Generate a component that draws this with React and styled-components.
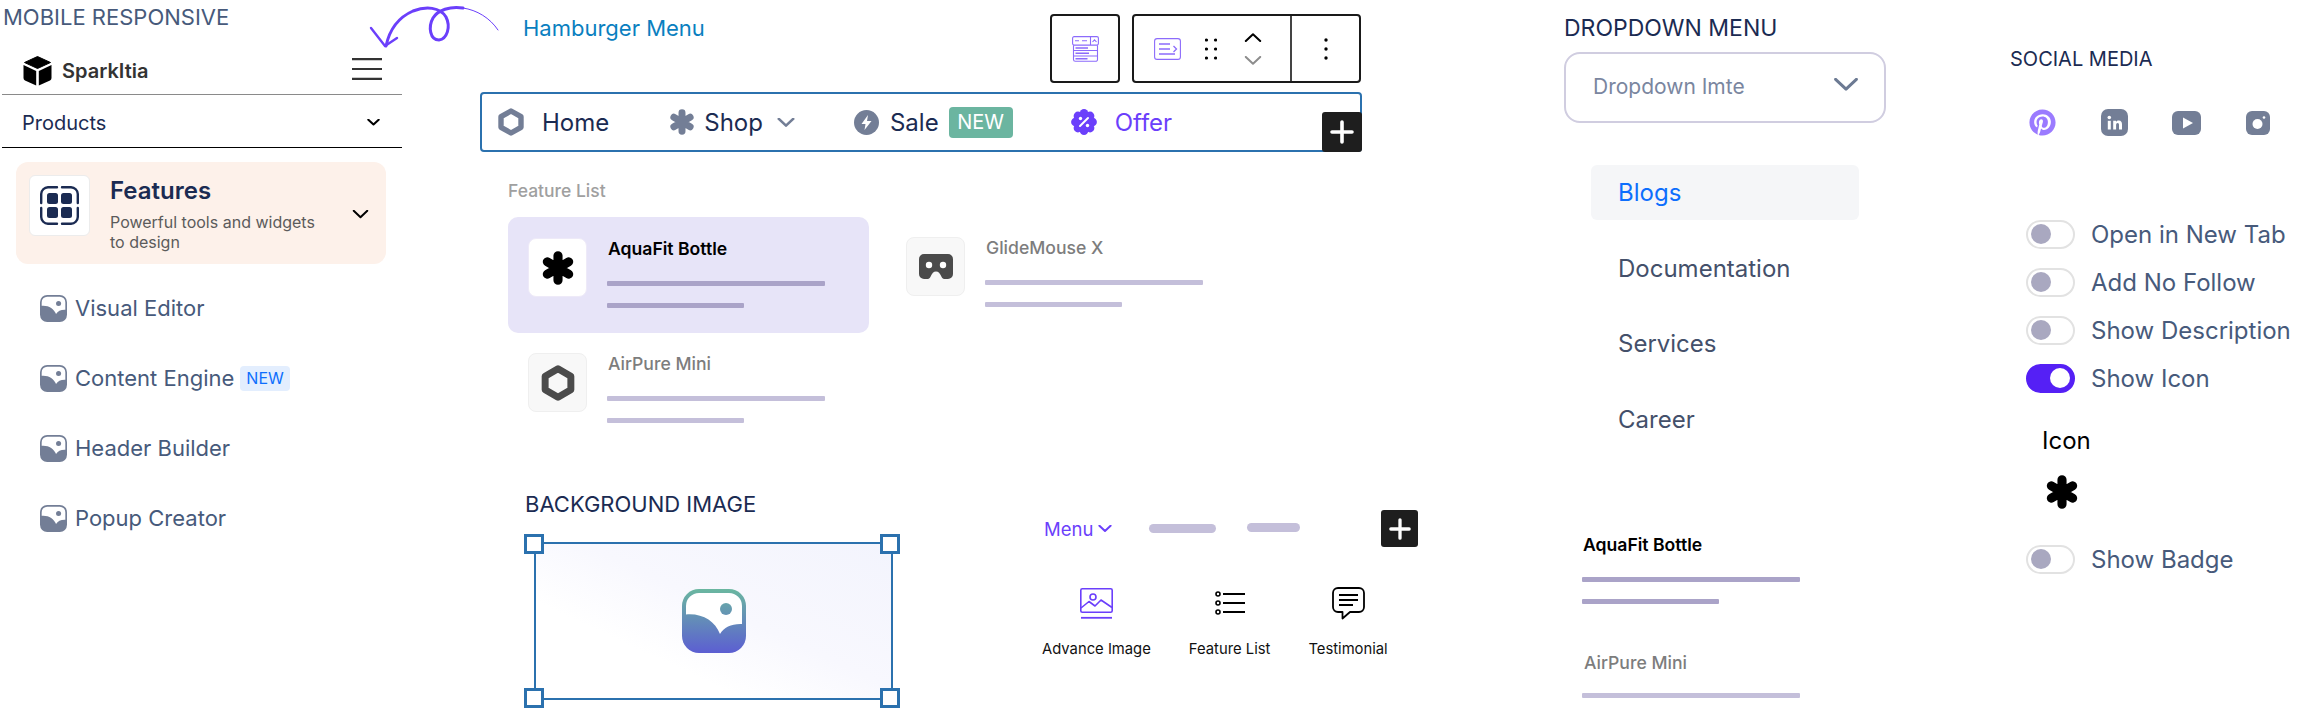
import styled, { createGlobalStyle } from "styled-components";
import { FaPinterest } from "react-icons/fa";

const INK = "#1b2b52";
const SLATE = "#475a7b";
const GLYPH = "#737e96";
const PURPLE = "#6b3ffb";
const SELECTION = "#2b71ae";

export default function App() {
	return (
		<Page>
			<GlobalStyle />
			<LoopArrow />

			<MobileColumn>
				<SectionTitle $size={22} $color={SLATE} $inset={1}>
					MOBILE RESPONSIVE
				</SectionTitle>
				<MobileHeader>
					<Brand>
						<CubeLogo />
						SparkItia
					</Brand>
					<HamburgerIcon />
				</MobileHeader>
				<ProductsRow>
					Products
					<Chevron size={13} stroke={2} color="#000" />
				</ProductsRow>
				<FeatureCard>
					<FeatureIconBox>
						<DashboardIcon />
					</FeatureIconBox>
					<FeatureCopy>
						<FeatureName>Features</FeatureName>
						<FeatureText>Powerful tools and widgets to design</FeatureText>
					</FeatureCopy>
					<Chevron size={17} stroke={2} color="#000" />
				</FeatureCard>
				<MobileList>
					{mobileItems.map((item) => (
						<MobileItem key={item.label}>
							<ImageGlyph size={27} fill={GLYPH} />
							{item.label}
							{item.badge && <SoftBadge>{item.badge}</SoftBadge>}
						</MobileItem>
					))}
				</MobileList>
			</MobileColumn>

			<EditorColumn>
				<TopRow>
					<HamburgerLabel>Hamburger Menu</HamburgerLabel>
					<Toolbars>
						<ToolGroup>
							<ToolCell $width={66} $center>
								<TableIcon />
							</ToolCell>
						</ToolGroup>
						<ToolGroup>
							<ToolCell $width={156}>
								<ListBlockIcon />
								<GripIcon />
								<Mover>
									<Chevron size={18} stroke={2} color="#000" up />
									<Chevron size={18} stroke={2} color="#8d8d8d" />
								</Mover>
							</ToolCell>
							<ToolCell $width={69} $center $divided>
								<KebabIcon />
							</ToolCell>
						</ToolGroup>
					</Toolbars>
				</TopRow>

				<NavBar>
					<NavItem $after={60}>
						<HexIcon width={26} height={28} color={GLYPH} />
						<NavLabel $iconGap={18}>Home</NavLabel>
					</NavItem>
					<NavItem $after={59}>
						<AsteriskIcon size={26} color={GLYPH} />
						<NavLabel $iconGap={9}>Shop</NavLabel>
						<NavChevron>
							<Chevron size={18} stroke={2.6} color={GLYPH} />
						</NavChevron>
					</NavItem>
					<NavItem $after={58}>
						<BoltIcon />
						<NavLabel $iconGap={11}>Sale</NavLabel>
						<GreenBadge>NEW</GreenBadge>
					</NavItem>
					<NavItem>
						<OfferIcon />
						<NavLabel $iconGap={18} $active>
							Offer
						</NavLabel>
					</NavItem>
					<CornerPlus>
						<PlusIcon size={24} />
					</CornerPlus>
				</NavBar>

				<FeatureSection>
					<FeatureHeading>Feature List</FeatureHeading>
					<FeatureGrid>
						<FeatureItem $selected>
							<ThumbBox $selected>
								<AsteriskIcon size={34} color="#000" />
							</ThumbBox>
							<ItemBody title="AquaFit Bottle" selected />
						</FeatureItem>
						<FeatureItem $lift={1}>
							<ThumbBox>
								<GogglesIcon />
							</ThumbBox>
							<ItemBody title="GlideMouse X" />
						</FeatureItem>
						<FeatureItem $lift={1}>
							<ThumbBox>
								<HexIcon width={34} height={36} color="#4b4b4b" />
							</ThumbBox>
							<ItemBody title="AirPure Mini" />
						</FeatureItem>
					</FeatureGrid>
				</FeatureSection>

				<LowerRow>
					<BackgroundBlock>
						<SectionTitle $size={22} $color={INK} $height={28}>
							BACKGROUND IMAGE
						</SectionTitle>
						<ImageFrame>
							<ImageGlyph size={64} gradient />
							<Handle $x="left" $y="top" />
							<Handle $x="right" $y="top" />
							<Handle $x="left" $y="bottom" />
							<Handle $x="right" $y="bottom" />
						</ImageFrame>
					</BackgroundBlock>

					<MenuBlock>
						<MenuRow>
							<MenuLabel>Menu</MenuLabel>
							<Chevron size={14} stroke={2} color={PURPLE} />
							<MenuBar $width={67} $gap={32} />
							<MenuBar $width={53} $gap={26} $raised />
							<MenuPlus>
								<PlusIcon size={22} />
							</MenuPlus>
						</MenuRow>
						<Tiles>
							<Tile>
								<TileIcon>
									<PictureIcon />
								</TileIcon>
								Advance Image
							</Tile>
							<Tile>
								<TileIcon>
									<BulletsIcon />
								</TileIcon>
								Feature List
							</Tile>
							<Tile>
								<TileIcon>
									<BubbleIcon />
								</TileIcon>
								Testimonial
							</Tile>
						</Tiles>
					</MenuBlock>
				</LowerRow>
			</EditorColumn>

			<DropdownColumn>
				<SectionTitle $size={23} $color={INK}>
					DROPDOWN MENU
				</SectionTitle>
				<DropdownBox>
					Dropdown Imte
					<Chevron size={26} stroke={3} color="#6c7a93" />
				</DropdownBox>
				<DropdownList>
					<DropdownItem $active>Blogs</DropdownItem>
					<DropdownItem>Documentation</DropdownItem>
					<DropdownItem>Services</DropdownItem>
					<DropdownItem>Career</DropdownItem>
				</DropdownList>
				<PlainList>
					<ItemBody title="AquaFit Bottle" selected />
					<PlainTitle>AirPure Mini</PlainTitle>
					<LineBar $width={218} />
				</PlainList>
			</DropdownColumn>

			<SettingsColumn>
				<SocialTitle>SOCIAL MEDIA</SocialTitle>
				<SocialRow>
					<FaPinterest size={27} color="#9b7bff" />
					<LinkedinIcon />
					<YoutubeIcon />
					<InstagramIcon />
				</SocialRow>
				<ToggleList>
					<ToggleRow label="Open in New Tab" />
					<ToggleRow label="Add No Follow" />
					<ToggleRow label="Show Description" />
					<ToggleRow label="Show Icon" on />
				</ToggleList>
				<IconPicker>
					<IconLabel>Icon</IconLabel>
					<AsteriskIcon size={34} color="#000" />
				</IconPicker>
				<BadgeToggle>
					<ToggleRow label="Show Badge" />
				</BadgeToggle>
			</SettingsColumn>
		</Page>
	);

	function ToggleRow({ label, on }) {
		return (
			<ToggleLine>
				<Toggle $on={on} />
				{label}
			</ToggleLine>
		);
	}

	function ItemBody({ title, selected }) {
		return (
			<Body>
				<ItemTitle $selected={selected}>{title}</ItemTitle>
				<LineBar $width={218} $dark={selected} />
				<LineBar $width={137} $dark={selected} />
			</Body>
		);
	}
}

const mobileItems = [
	{ label: "Visual Editor" },
	{ label: "Content Engine", badge: "NEW" },
	{ label: "Header Builder" },
	{ label: "Popup Creator" },
];

function Chevron({ size, stroke, color, up }) {
	return (
		<svg width={size} height={size / 2} viewBox="0 0 20 10" fill="none">
			<path
				d={up ? "M2 9 10 1.5 18 9" : "M2 1 10 8.5 18 1"}
				stroke={color}
				strokeWidth={(stroke * 20) / size}
				strokeLinecap="round"
				strokeLinejoin="round"
			/>
		</svg>
	);
}

function LoopArrow() {
	return (
		<ArrowSvg width="150" height="56" viewBox="0 0 150 56" fill="none">
			<path
				d="M21 46C24 32 32 18 48 11 61 6 75 7 81 17 86 27 82 39 74 40 65 40 63 27 68 18 73 10 85 6 98 8"
				stroke={PURPLE}
				strokeWidth="3"
				strokeLinecap="round"
			/>
			<path d="M98 8C112 10 125 18 133 30" stroke={PURPLE} strokeWidth="1" strokeLinecap="round" />
			<path d="M6 28 20 46 32 38" stroke={PURPLE} strokeWidth="2.4" strokeLinecap="round" strokeLinejoin="round" />
		</ArrowSvg>
	);
}

function CubeLogo() {
	return (
		<svg width="29" height="30" viewBox="0 0 29 30">
			<path d="M14.5 0.5 27.5 6.5 14.5 12.5 1.5 6.5Z" fill="#000" stroke="#000" strokeLinejoin="round" />
			<path d="M0.5 9 13.2 15V29.5L2 24.5Q0.5 23.8 0.5 22Z" fill="#000" />
			<path d="M28.5 9 15.8 15V29.5L27 24.5Q28.5 23.8 28.5 22Z" fill="#000" />
		</svg>
	);
}

function HamburgerIcon() {
	return (
		<svg width="30" height="22" viewBox="0 0 30 22" stroke="#333" strokeWidth="2.2">
			<path d="M0 1.2H30M0 11H30M0 20.8H30" />
		</svg>
	);
}

function DashboardIcon() {
	return (
		<svg width="39" height="39" viewBox="0 0 39 39" fill="none">
			<path
				d="M1.2 17V8A7 7 0 0 1 8 1.2H17M22 1.2H31A7 7 0 0 1 37.8 8V17M37.8 22V31A7 7 0 0 1 31 37.8H22M17 37.8H8A7 7 0 0 1 1.2 31V22"
				stroke={INK}
				strokeWidth="2.4"
				strokeLinecap="round"
			/>
			<rect x="7" y="7" width="11" height="11" rx="2.5" fill={INK} />
			<rect x="21" y="7" width="11" height="11" rx="2.5" fill={INK} />
			<rect x="7" y="21" width="11" height="11" rx="2.5" fill={INK} />
			<rect x="21" y="21" width="11" height="11" rx="2.5" fill={INK} />
		</svg>
	);
}

function ImageGlyph({ size, fill, gradient }) {
	const paint = gradient ? "url(#glyph-gradient)" : fill;
	return (
		<svg width={size} height={size} viewBox="0 0 64 64">
			{gradient && (
				<defs>
					<linearGradient id="glyph-gradient" gradientUnits="userSpaceOnUse" x1="0" y1="0" x2="0" y2="64">
						<stop offset="0" stopColor="#6ab7a0" />
						<stop offset="1" stopColor="#5c5ed2" />
					</linearGradient>
				</defs>
			)}
			<rect width="64" height="64" rx="17" fill={paint} />
			<path
				d="M4 25.5V17A13 13 0 0 1 17 4H47A13 13 0 0 1 60 17V35C50 34.5 42 38 38 45 33 32 20 24 4 25.5Z"
				fill="#fff"
			/>
			<circle cx="44" cy="20" r="6" fill={paint} />
		</svg>
	);
}

function HexIcon({ width, height, color }) {
	return (
		<svg width={width} height={height} viewBox="0 0 26 28" fill="none">
			<path d="M13 3 23 8.7V19.3L13 25 3 19.3V8.7Z" stroke={color} strokeWidth="5.4" strokeLinejoin="round" />
		</svg>
	);
}

function AsteriskIcon({ size, color }) {
	return (
		<svg width={size} height={size} viewBox="0 0 32 32" fill="none" stroke={color} strokeWidth="8.6" strokeLinecap="round">
			<path d="M16 4.5V27.5M6 10.2 26 21.8M6 21.8 26 10.2" />
		</svg>
	);
}

function BoltIcon() {
	return (
		<svg width="25" height="25" viewBox="0 0 25 25">
			<circle cx="12.5" cy="12.5" r="12.5" fill={GLYPH} />
			<path d="M14 5 7.5 14H11.5L10.5 20 17.5 11H13Z" fill="#fff" />
		</svg>
	);
}

function OfferIcon() {
	const lobes = [0, 45, 90, 135, 180, 225, 270, 315];
	return (
		<svg width="26" height="26" viewBox="0 0 26 26">
			<circle cx="13" cy="13" r="10" fill={PURPLE} />
			{lobes.map((angle) => (
				<circle
					key={angle}
					cx={13 + 8.6 * Math.cos((angle * Math.PI) / 180)}
					cy={13 + 8.6 * Math.sin((angle * Math.PI) / 180)}
					r="4.3"
					fill={PURPLE}
				/>
			))}
			<path d="M9 17 17 9" stroke="#fff" strokeWidth="2" strokeLinecap="round" />
			<circle cx="9.5" cy="9.5" r="1.7" fill="#fff" />
			<circle cx="16.5" cy="16.5" r="1.7" fill="#fff" />
		</svg>
	);
}

function PlusIcon({ size }) {
	return (
		<svg width={size} height={size} viewBox="0 0 24 24" fill="none" stroke="#fff" strokeWidth="3.6" strokeLinecap="round">
			<path d="M12 2V22M2 12H22" />
		</svg>
	);
}

function TableIcon() {
	return (
		<svg width="27" height="26" viewBox="0 0 27 26" fill="none" stroke="#8c6bfb" strokeWidth="1.1">
			<rect x="0.6" y="0.6" width="25.8" height="8.5" rx="1.5" />
			<path d="M18.5 0.6V9.1M3 4.8H7M10 4.8H15M20.5 6 22.5 3.8 24.5 6" />
			<path d="M1.5 9.2V23.5A1.8 1.8 0 0 0 3.3 25.3H23.7A1.8 1.8 0 0 0 25.5 23.5V9.2" />
			<path d="M1.5 14.5H25.5M1.5 20H25.5" />
			<path d="M3.5 12H16M3.5 17.2H17M3.5 22.8H15.5" strokeWidth="1.5" />
		</svg>
	);
}

function ListBlockIcon() {
	return (
		<svg width="27" height="22" viewBox="0 0 27 22" fill="none" stroke="#8c6bfb" strokeWidth="1.1">
			<rect x="0.6" y="0.6" width="25.8" height="20.8" rx="2.5" />
			<path d="M5 6H16M5 11H16M5 16H21M19.5 8 22.5 11 19.5 14" strokeWidth="1.3" />
		</svg>
	);
}

function GripIcon() {
	return (
		<svg width="12" height="22" viewBox="0 0 12 22" fill="#000">
			{[2, 11, 20].map((y) => (
				<g key={y}>
					<circle cx="1.5" cy={y} r="1.6" />
					<circle cx="10.5" cy={y} r="1.6" />
				</g>
			))}
		</svg>
	);
}

function KebabIcon() {
	return (
		<svg width="4" height="22" viewBox="0 0 4 22" fill="#000">
			<circle cx="2" cy="2" r="1.7" />
			<circle cx="2" cy="11" r="1.7" />
			<circle cx="2" cy="20" r="1.7" />
		</svg>
	);
}

function GogglesIcon() {
	return (
		<svg width="34" height="25" viewBox="0 0 34 25">
			<path
				d="M5 0H29A5 5 0 0 1 34 5V20A5 5 0 0 1 29 25H25.5C23.5 25 22.8 23.6 22 21.8 21 19.5 19.5 17.5 17 17.5S13 19.5 12 21.8C11.2 23.6 10.5 25 8.5 25H5A5 5 0 0 1 0 20V5A5 5 0 0 1 5 0Z"
				fill="#4b4b4b"
			/>
			<circle cx="10" cy="11" r="3.2" fill="#fff" />
			<circle cx="24" cy="11" r="3.2" fill="#fff" />
		</svg>
	);
}

function PictureIcon() {
	return (
		<svg width="33" height="31" viewBox="0 0 33 31" fill="none" stroke={PURPLE} strokeWidth="1.6" strokeLinejoin="round">
			<rect x="0.8" y="0.8" width="31.4" height="23.4" rx="1.5" />
			<circle cx="13" cy="9" r="3" />
			<path d="M1 20 9 13.5 15 18 21 12 32 19.5" />
			<path d="M1 29.8H32" strokeWidth="1.8" />
		</svg>
	);
}

function BulletsIcon() {
	return (
		<svg width="30" height="24" viewBox="0 0 30 24" fill="none" stroke="#000">
			<circle cx="3" cy="3" r="2" strokeWidth="1.6" />
			<circle cx="3" cy="12" r="2" strokeWidth="1.6" />
			<circle cx="3" cy="21" r="2" strokeWidth="1.6" />
			<path d="M8 3H30M8 12H30M8 21H30" strokeWidth="1.8" />
		</svg>
	);
}

function BubbleIcon() {
	return (
		<svg width="33" height="33" viewBox="0 0 33 33" fill="none" stroke="#000" strokeWidth="1.8" strokeLinejoin="round">
			<path d="M6 1H27A5 5 0 0 1 32 6V20A5 5 0 0 1 27 25H18L10.5 31.5V25H6A5 5 0 0 1 1 20V6A5 5 0 0 1 6 1Z" />
			<path d="M7 8H26M7 13H26M7 18H21" />
		</svg>
	);
}

function LinkedinIcon() {
	return (
		<svg width="27" height="27" viewBox="0 0 27 27">
			<rect width="27" height="27" rx="7" fill={GLYPH} />
			<circle cx="8.3" cy="8.5" r="1.8" fill="#fff" />
			<path d="M6.8 11.8H9.8V20.5H6.8Z" fill="#fff" />
			<path d="M12.2 11.8H15V13C15.7 12 16.8 11.5 18 11.6 20 11.8 21 13.2 21 15.4V20.5H18V15.9C18 14.7 17.5 14 16.6 14 15.6 14 15.1 14.8 15.1 15.9V20.5H12.2Z" fill="#fff" />
		</svg>
	);
}

function YoutubeIcon() {
	return (
		<svg width="29" height="24" viewBox="0 0 29 24">
			<rect width="29" height="24" rx="6" fill={GLYPH} />
			<path d="M11 6.5 21 12 11 17.5Z" fill="#fff" />
		</svg>
	);
}

function InstagramIcon() {
	return (
		<svg width="24" height="24" viewBox="0 0 24 24">
			<rect width="24" height="24" rx="6" fill={GLYPH} />
			<circle cx="11.5" cy="13" r="5" fill="#fff" />
			<circle cx="18" cy="6.5" r="1.3" fill="#fff" />
		</svg>
	);
}

const GlobalStyle = createGlobalStyle`
	html,
	body {
		margin: 0;
		padding: 0;
		background: #fff;
		font-family: "Inter", "Liberation Sans", sans-serif;
	}

	* {
		box-sizing: border-box;
	}
`;

const Page = styled.div`
	position: relative;
	width: 2320px;
	height: 724px;
	overflow: hidden;
	display: grid;
	grid-template-columns: 480px 1020px 500px 320px;
`;

const ArrowSvg = styled.svg`
	position: absolute;
	left: 365px;
	top: 0;
`;

const SectionTitle = styled.h2`
	margin: 0 0 0 ${(props) => props.$inset || 0}px;
	font-size: ${(props) => props.$size}px;
	line-height: ${(props) => props.$height || 24}px;
	font-weight: 400;
	color: ${(props) => props.$color};
	white-space: nowrap;
`;

const MobileColumn = styled.section`
	padding: 5px 0 0 2px;
`;

const MobileHeader = styled.div`
	width: 400px;
	height: 66px;
	padding: 18px 20px 0 21px;
	display: flex;
	align-items: center;
	justify-content: space-between;
	border-bottom: 1px solid #8a8a8a;

	> svg {
		margin-top: -4px;
	}
`;

const Brand = styled.div`
	display: flex;
	align-items: center;
	gap: 10px;
	font-size: 20px;
	font-weight: 600;
	color: #333;
`;

const ProductsRow = styled.div`
	width: 400px;
	height: 53px;
	padding: 3px 22px 0 20px;
	display: flex;
	align-items: center;
	justify-content: space-between;
	border-bottom: 1px solid #000;
	font-size: 20px;
	color: ${INK};
`;

const FeatureCard = styled.div`
	width: 370px;
	height: 102px;
	margin: 14px 0 0 14px;
	padding: 13px 17px 0 13px;
	display: flex;
	align-items: flex-start;
	background: #fdf1ea;
	border-radius: 12px;

	> svg {
		margin-top: 35px;
	}
`;

const FeatureIconBox = styled.div`
	width: 61px;
	height: 61px;
	flex: none;
	display: flex;
	align-items: center;
	justify-content: center;
	background: #fff;
	border: 1px solid #ececec;
	border-radius: 6px;
`;

const FeatureCopy = styled.div`
	width: 215px;
	margin-left: 20px;
	margin-right: auto;
`;

const FeatureName = styled.div`
	margin-top: 3px;
	font-size: 24px;
	line-height: 26px;
	font-weight: 600;
	color: ${INK};
`;

const FeatureText = styled.div`
	margin-top: 8px;
	font-size: 16px;
	line-height: 20px;
	color: #5b5b5b;
`;

const MobileList = styled.div`
	margin-top: 9px;
`;

const MobileItem = styled.div`
	height: 70px;
	padding-left: 38px;
	display: flex;
	align-items: center;
	font-size: 22px;
	color: ${SLATE};

	svg {
		margin-right: 8px;
	}
`;

const SoftBadge = styled.span`
	margin-left: 6px;
	padding: 0 6px;
	height: 25px;
	display: flex;
	align-items: center;
	font-size: 16px;
	color: #0d6efd;
	background: #e3eefe;
	border-radius: 4px;
`;

const EditorColumn = styled.section`
	width: 1020px;
`;

const TopRow = styled.div`
	width: 882px;
	height: 92px;
	padding: 16px 1px 0 43px;
	display: flex;
	justify-content: space-between;
	align-items: flex-start;
`;

const HamburgerLabel = styled.div`
	font-size: 22px;
	line-height: 24px;
	color: #0a7fc0;
`;

const Toolbars = styled.div`
	margin-top: -2px;
	display: flex;
	gap: 12px;
`;

const ToolGroup = styled.div`
	height: 69px;
	display: flex;
	border: 2px solid #1a1a1a;
	border-radius: 4px;
`;

const ToolCell = styled.div`
	width: ${(props) => props.$width}px;
	padding-left: ${(props) => (props.$center ? 0 : 20)}px;
	display: flex;
	align-items: center;
	justify-content: ${(props) => (props.$center ? "center" : "flex-start")};
	gap: 24px;
	border-left: ${(props) => (props.$divided ? "2px solid #444" : "none")};
`;

const Mover = styled.div`
	margin-left: 3px;
	display: flex;
	flex-direction: column;
	gap: 14px;

	svg {
		display: block;
	}
`;

const NavBar = styled.nav`
	position: relative;
	width: 882px;
	height: 60px;
	padding-left: 16px;
	display: flex;
	align-items: center;
	border: 2px solid ${SELECTION};
	border-radius: 4px;
`;

const NavItem = styled.div`
	display: flex;
	align-items: center;
	margin-right: ${(props) => props.$after || 0}px;
`;

const NavLabel = styled.span`
	margin-left: ${(props) => props.$iconGap}px;
	font-size: 24px;
	color: ${(props) => (props.$active ? PURPLE : INK)};
`;

const NavChevron = styled.span`
	display: flex;
	margin-left: 14px;
`;

const GreenBadge = styled.span`
	margin-left: 10px;
	width: 64px;
	height: 31px;
	display: flex;
	align-items: center;
	justify-content: center;
	font-size: 20px;
	color: #fff;
	background: #6bb5a0;
	border-radius: 4px;
`;

const PlusBox = styled.div`
	display: flex;
	align-items: center;
	justify-content: center;
	background: #1e1e1e;
	border-radius: 3px;
`;

const CornerPlus = styled(PlusBox)`
	position: absolute;
	right: -2px;
	bottom: -2px;
	width: 40px;
	height: 40px;
`;

const FeatureSection = styled.div`
	height: 338px;
	padding: 27px 0 0 28px;
`;

const FeatureHeading = styled.div`
	font-size: 17.5px;
	line-height: 24px;
	font-weight: 500;
	color: #a0a0a0;
`;

const FeatureGrid = styled.div`
	margin-top: 14px;
	display: grid;
	grid-template-columns: 361px 362px;
	column-gap: 17px;
	grid-auto-rows: 116px;
`;

const FeatureItem = styled.div`
	display: flex;
	gap: 20px;
	padding: 21px 0 0 20px;
	margin-top: ${(props) => -(props.$lift || 0)}px;
	background: ${(props) => (props.$selected ? "#e7e4f8" : "transparent")};
	border-radius: 10px;
`;

const ThumbBox = styled.div`
	width: 59px;
	height: 59px;
	flex: none;
	display: flex;
	align-items: center;
	justify-content: center;
	background: ${(props) => (props.$selected ? "#fff" : "#f8f8f8")};
	border: 1px solid ${(props) => (props.$selected ? "#eeeaf8" : "#efefef")};
	border-radius: 8px;
`;

const Body = styled.div`
	display: flex;
	flex-direction: column;
`;

const ItemTitle = styled.div`
	margin-left: 1px;
	font-size: 17.6px;
	line-height: 22px;
	font-weight: ${(props) => (props.$selected ? 600 : 500)};
	color: ${(props) => (props.$selected ? "#000" : "#7d7d7d")};
`;

const LineBar = styled.div`
	width: ${(props) => props.$width}px;
	height: 5px;
	margin-top: 17px;
	background: ${(props) => (props.$dark ? "#aaa3c8" : "#c4bfda")};
	border-radius: 1px;

	${ItemTitle} + & {
		margin-top: 21px;
	}
`;

const LowerRow = styled.div`
	display: flex;
`;

const BackgroundBlock = styled.div`
	width: 564px;
	flex: none;
	padding-left: 45px;
`;

const ImageFrame = styled.div`
	position: relative;
	width: 359px;
	height: 158px;
	margin: 24px 0 0 9px;
	display: flex;
	align-items: center;
	justify-content: center;
	border: 2px solid ${SELECTION};
	background: linear-gradient(205deg, #f3f4fd 0%, #f8f8fe 45%, #ffffff 70%);
`;

const Handle = styled.span`
	position: absolute;
	${(props) => props.$x}: ${(props) => (props.$x === "left" ? -12 : -9)}px;
	${(props) => props.$y}: -10px;
	width: 20px;
	height: 20px;
	background: #fff;
	border: 3px solid ${SELECTION};
`;

const MenuBlock = styled.div`
	width: 374px;
	flex: none;
	padding-top: 20px;
`;

const MenuRow = styled.div`
	height: 37px;
	display: flex;
	align-items: center;
	gap: 5px;
`;

const MenuLabel = styled.span`
	font-size: 18.5px;
	color: ${PURPLE};
`;

const MenuBar = styled.span`
	width: ${(props) => props.$width}px;
	height: 9px;
	margin-left: ${(props) => props.$gap}px;
	margin-bottom: ${(props) => (props.$raised ? 2 : 0)}px;
	background: #c4bfda;
	border-radius: 5px;
`;

const MenuPlus = styled(PlusBox)`
	width: 37px;
	height: 37px;
	margin-left: auto;
`;

const Tiles = styled.div`
	margin: 39px 0 0 -2px;
	display: flex;
	gap: 38px;
`;

const Tile = styled.div`
	display: flex;
	flex-direction: column;
	align-items: center;
	gap: 19px;
	font-size: 14.8px;
	line-height: 20px;
	color: #111;
	white-space: nowrap;
`;

const TileIcon = styled.div`
	height: 34px;
	display: flex;
	align-items: center;
`;

const DropdownColumn = styled.section`
	padding: 16px 0 0 64px;
`;

const DropdownBox = styled.div`
	width: 322px;
	height: 71px;
	margin-top: 12px;
	padding: 0 25px 2px 27px;
	display: flex;
	align-items: center;
	justify-content: space-between;
	border: 2px solid #d0cde0;
	border-radius: 16px;
	font-size: 21px;
	color: #7a869f;
	background: #fff;

	svg {
		margin-bottom: 4px;
	}
`;

const DropdownList = styled.div`
	width: 268px;
	margin: 42px 0 0 27px;
	display: flex;
	flex-direction: column;
	gap: 20.5px;
`;

const DropdownItem = styled.div`
	height: 55px;
	padding-left: 27px;
	display: flex;
	align-items: center;
	font-size: 24px;
	color: ${(props) => (props.$active ? "#0d6efd" : "#44506a")};
	background: ${(props) => (props.$active ? "#f5f6f8" : "transparent")};
	border-radius: 6px;
`;

const PlainList = styled.div`
	margin: 87px 0 0 18px;
`;

const PlainTitle = styled.div`
	margin: 48px 0 0 2px;
	font-size: 17.6px;
	line-height: 22px;
	font-weight: 500;
	color: #7d7d7d;

	& + div {
		margin-top: 19px;
	}
`;

const SettingsColumn = styled.section`
	padding-top: 47px;
`;

const SocialTitle = styled.h2`
	margin: 0 0 0 10px;
	font-size: 20px;
	line-height: 24px;
	font-weight: 400;
	color: ${INK};
`;

const SocialRow = styled.div`
	height: 29px;
	margin: 37px 0 0 6px;
	display: grid;
	grid-template-columns: repeat(4, 72px);
	justify-items: center;
	align-items: center;
`;

const ToggleList = styled.div`
	margin-top: 73px;
`;

const ToggleLine = styled.div`
	height: 48px;
	padding-left: 26px;
	display: flex;
	align-items: center;
	gap: 16px;
	font-size: 24px;
	color: ${SLATE};
`;

const Toggle = styled.span`
	width: 49px;
	height: 29px;
	padding: 0 3px;
	display: flex;
	align-items: center;
	justify-content: ${(props) => (props.$on ? "flex-end" : "flex-start")};
	border: 2px solid ${(props) => (props.$on ? "#5520f5" : "#e2e2e2")};
	background: ${(props) => (props.$on ? "#5520f5" : "#fff")};
	border-radius: 15px;

	&::after {
		content: "";
		width: 20px;
		height: 20px;
		border-radius: 50%;
		background: ${(props) => (props.$on ? "#fff" : "#a9a8c0")};
	}
`;

const IconPicker = styled.div`
	margin: 25px 0 0 42px;

	svg {
		display: block;
		margin: 20px 0 0 3px;
	}
`;

const IconLabel = styled.div`
	font-size: 24px;
	line-height: 28px;
	color: #000;
`;

const BadgeToggle = styled.div`
	margin-top: 26px;
`;
